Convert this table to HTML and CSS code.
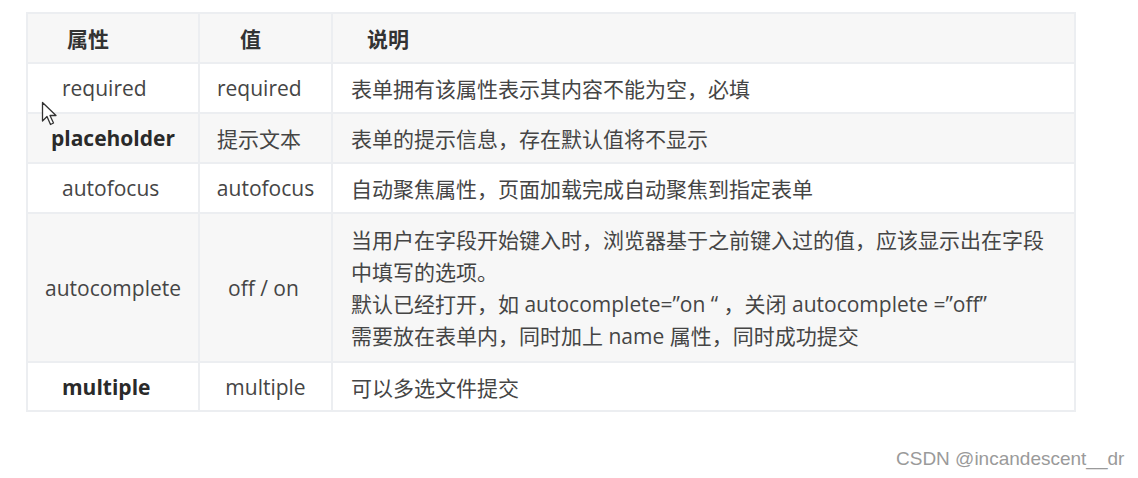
FILE: index.html
```html
<!DOCTYPE html>
<html lang="zh-CN">

<head>
    <meta charset="UTF-8">
    <meta name="viewport" content="width=device-width, initial-scale=1.0">
    <title>表单属性</title>
    <link rel="stylesheet" href="styles.css">
</head>

<body>
    <div class="page">
        <table class="attr-table">
            <colgroup>
                <col class="col-name">
                <col class="col-value">
                <col class="col-desc">
            </colgroup>
            <thead>
                <tr>
                    <th class="th-name">属性</th>
                    <th class="th-value">值</th>
                    <th class="th-desc">说明</th>
                </tr>
            </thead>
            <tbody>
                <tr>
                    <td class="name left">required</td>
                    <td class="value left">required</td>
                    <td class="desc">表单拥有该属性表示其内容不能为空，必填</td>
                </tr>
                <tr class="alt">
                    <td class="name strong">placeholder</td>
                    <td class="value left">提示文本</td>
                    <td class="desc">表单的提示信息，存在默认值将不显示</td>
                </tr>
                <tr>
                    <td class="name left">autofocus</td>
                    <td class="value">autofocus</td>
                    <td class="desc">自动聚焦属性，页面加载完成自动聚焦到指定表单</td>
                </tr>
                <tr class="alt tall">
                    <td class="name">autocomplete</td>
                    <td class="value left wide">off / on</td>
                    <td class="desc multi">当用户在字段开始键入时，浏览器基于之前键入过的值，应该显示出在字段<br>中填写的选项。<br>默认已经打开，如 autocomplete=”on “ ，关闭 autocomplete =”off”<br>需要放在表单内，同时加上 name 属性，同时成功提交</td>
                </tr>
                <tr class="last">
                    <td class="name left strong">multiple</td>
                    <td class="value">multiple</td>
                    <td class="desc">可以多选文件提交</td>
                </tr>
            </tbody>
        </table>

        <!-- mouse pointer caught in the screenshot -->
        <svg class="cursor" width="18" height="26" viewBox="0 0 18 26">
            <path d="M1.5 1.5 L1.5 20 L6 15.5 L9.5 23.5 L12.5 22 L9 14.5 L15 14.5 Z" fill="#fff" stroke="#333" stroke-width="1.3" stroke-linejoin="round"/>
        </svg>
    </div>

    <div class="watermark">CSDN @incandescent__dr</div>
</body>

</html>
```

FILE: styles.css
```css
body {
    margin: 0;
    background: #fff;
    font-family: "Open Sans", "Noto Sans CJK SC", sans-serif;
    color: #454545;
}

.page {
    position: relative;
    padding: 12px 0 0 26px;
}

.attr-table {
    border-collapse: collapse;
    table-layout: fixed;
    width: 1050px;
    font-size: 21px;
}

.col-name {
    width: 172px;
}

.col-value {
    width: 133px;
}

.attr-table th,
.attr-table td {
    border: 2px solid #eceef1;
    padding: 0;
    vertical-align: middle;
    white-space: nowrap;
}

.attr-table thead tr {
    background: #f7f7f7;
    height: 50px;
}

.attr-table th {
    text-align: left;
    font-weight: 700;
    color: #333;
}

.th-name {
    padding-left: 39px !important;
}

.th-value {
    padding-left: 40px !important;
}

.th-desc {
    padding-left: 34px !important;
}

.attr-table tbody tr {
    height: 50px;
}

.attr-table tbody tr.alt {
    background: #f7f7f7;
}

.attr-table tbody tr.tall {
    height: 149px;
}

.attr-table tbody tr.last {
    height: 49px;
}

.name {
    text-align: center;
}

.name.left {
    text-align: left;
    padding-left: 34px !important;
}

.name.strong {
    font-weight: 700;
    color: #2a2a2a;
}

.value {
    text-align: center;
}

.value.left {
    text-align: left;
    padding-left: 17px !important;
}

.value.wide {
    padding-left: 28px !important;
}

.desc {
    padding-left: 18px !important;
}

.desc.multi {
    line-height: 32px;
}

.cursor {
    position: absolute;
    left: 41px;
    top: 101px;
}

.watermark {
    position: absolute;
    left: 896px;
    top: 448px;
    font-family: "Liberation Sans", Arial, sans-serif;
    font-size: 19px;
    color: #9a9a9a;
}
```
